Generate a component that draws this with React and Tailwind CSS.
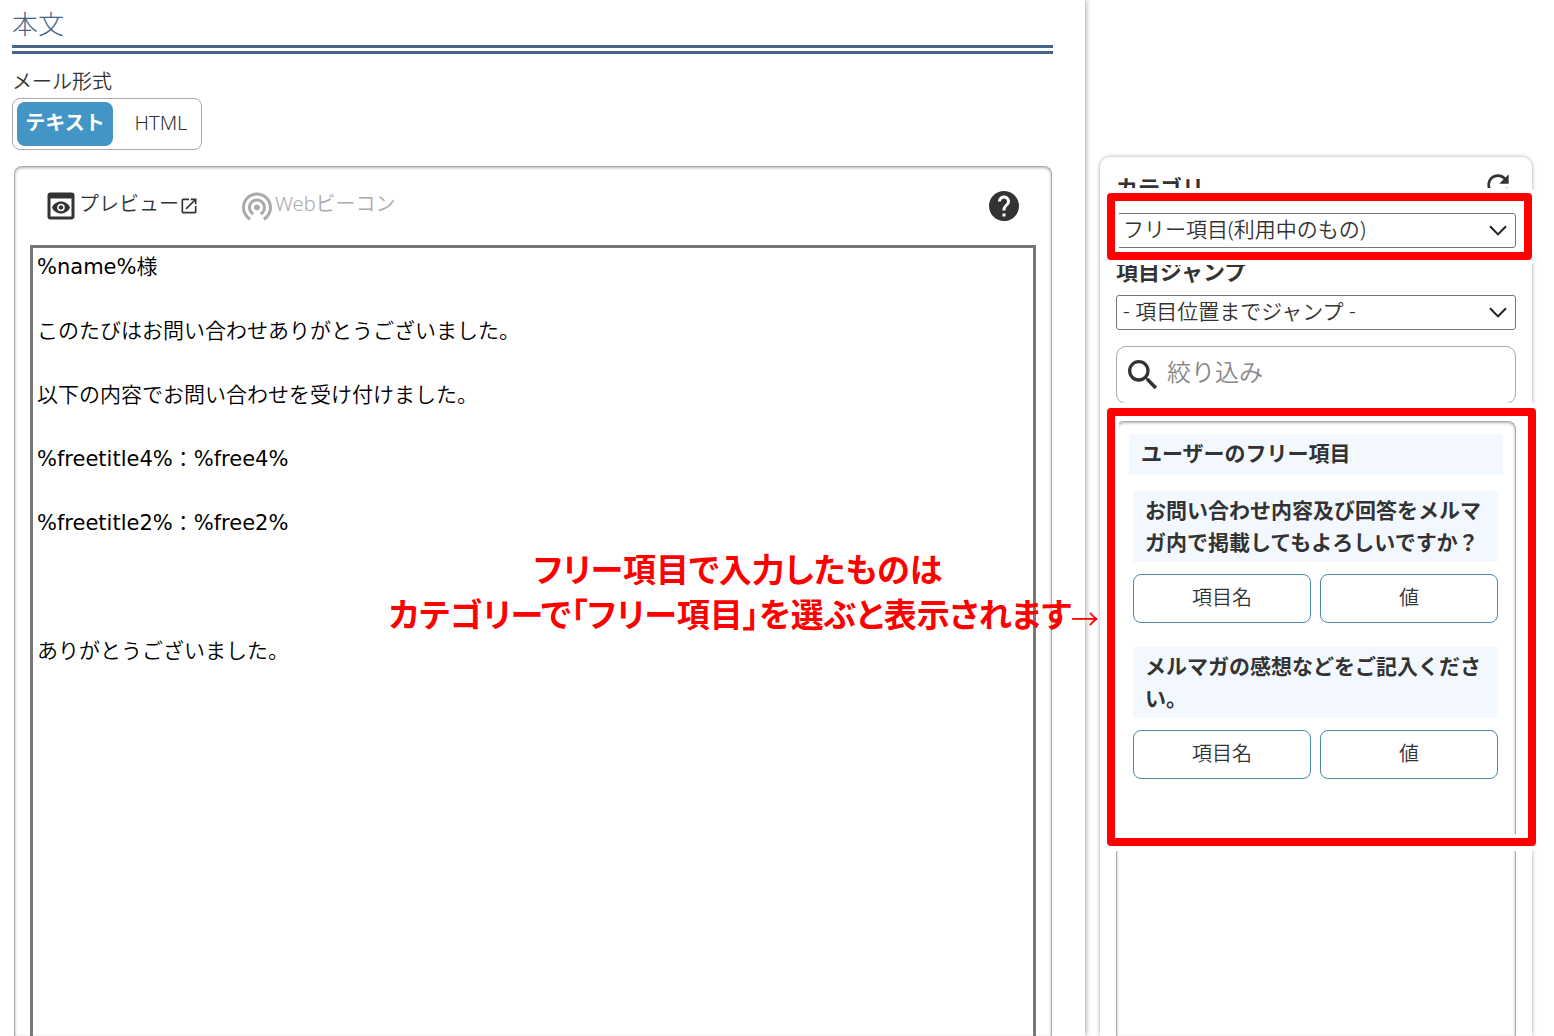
import { useState } from "react";
import {
  MdHelp,
  MdOpenInNew,
  MdPreview,
  MdRefresh,
  MdSearch,
  MdWifiTethering,
} from "react-icons/md";

const MAIL_BODY = `%name%様

このたびはお問い合わせありがとうございました。

以下の内容でお問い合わせを受け付けました。

%freetitle4%：%free4%

%freetitle2%：%free2%



ありがとうございました。
`;

const freeItems = [
  { id: 4, title: "お問い合わせ内容及び回答をメルマガ内で掲載してもよろしいですか？" },
  { id: 2, title: "メルマガの感想などをご記入ください。" },
];

function SelectBox({ id, options }) {
  return (
    <div className="relative">
      <select
        id={id}
        className="block w-full h-[35px] appearance-none rounded-[3px] border border-[#767676] bg-white pl-1.5 pr-10 pb-1 text-[21px] leading-7 text-[#333] font-[350]"
      >
        {options.map((o) => (
          <option key={o}>{o}</option>
        ))}
      </select>
      <svg
        viewBox="0 0 18 11"
        className="pointer-events-none absolute right-[9px] top-3 w-[18px] h-[11px]"
        fill="none"
        stroke="#222"
        strokeWidth="2"
      >
        <path d="M1 1.2 L9 9.4 L17 1.2" />
      </svg>
    </div>
  );
}

function InsertButton({ children }) {
  return (
    <button
      type="button"
      className="h-[49px] flex-1 rounded-lg border border-[#4b8ba8] bg-white pb-0.5 text-xl font-[350] text-[#333]"
    >
      {children}
    </button>
  );
}

function FreeItem({ title }) {
  return (
    <div className="ml-1 mr-[5px]">
      <p className="bg-[#f3f8fe] px-3 pt-[3px] pb-1 text-[21px] leading-8 font-bold">{title}</p>
      <div className="mt-3 flex gap-[9px]">
        <InsertButton>項目名</InsertButton>
        <InsertButton>値</InsertButton>
      </div>
    </div>
  );
}

// red marker frame with a white edge on both sides
function Marker({ className }) {
  return (
    <div
      className={`pointer-events-none absolute z-10 rounded-[4px] border-8 border-[#ff0000] shadow-[0_0_0_5px_#fff,inset_0_0_0_4px_#fff] ${className}`}
    />
  );
}

export default function App() {
  const [format, setFormat] = useState("text");
  const [body, setBody] = useState(MAIL_BODY);

  const tab = (active) =>
    active
      ? "rounded-lg bg-[#4395c6] font-bold text-white"
      : "rounded-lg font-[350] text-[#333]";

  return (
    <div className="relative flex min-h-screen overflow-hidden bg-white text-[#333] font-['Noto_Sans','Noto_Sans_CJK_JP',sans-serif]">
      <main className="relative flex flex-1 flex-col pl-3 pr-8 shadow-[1px_0_5px_rgba(0,0,0,0.35)]">
        <h1 className="h-[54px] border-b-9 border-double border-[#466489] pt-1 text-[26px] leading-10 font-light text-[#466489]">
          本文
        </h1>

        <p className="mt-3 text-xl leading-8 font-[350]">メール形式</p>
        <div className="flex h-[52px] w-[190px] items-center rounded-lg border border-[#aaa] pl-1">
          <button
            type="button"
            className={`h-11 w-24 shrink-0 pb-0.5 text-xl ${tab(format === "text")}`}
            onClick={() => setFormat("text")}
          >
            テキスト
          </button>
          <button
            type="button"
            className={`h-11 flex-1 pl-2 pb-0.5 text-xl ${tab(format === "html")}`}
            onClick={() => setFormat("html")}
          >
            HTML
          </button>
        </div>

        <section className="mt-4 ml-0.5 mr-px flex flex-1 flex-col rounded-t-lg border border-b-0 border-[#aaa] px-[15px] shadow-[inset_0_1px_3px_rgba(0,0,0,0.3)]">
          <div className="flex h-[78px] items-center pl-[13px] pr-3.5">
            <button type="button" className="flex items-center text-xl font-[350]">
              <MdPreview className="h-9 w-9 shrink-0" />
              <span className="pb-1">プレビュー</span>
              <MdOpenInNew className="h-5 w-5 shrink-0" />
            </button>
            <button type="button" className="ml-10 flex items-center text-xl font-[350] text-[#aaa]">
              <MdWifiTethering className="h-9 w-9 shrink-0" />
              <span className="pb-1">Webビーコン</span>
            </button>
            <button type="button" aria-label="ヘルプ" className="ml-auto">
              <MdHelp className="h-9 w-9" />
            </button>
          </div>
          <textarea
            aria-label="本文"
            value={body}
            onChange={(e) => setBody(e.target.value)}
            className="w-full flex-1 resize-none border-3 border-b-0 border-[#777] px-1 pt-[3px] text-[21px] leading-8 text-black outline-none font-['DejaVu_Sans','Noto_Sans_CJK_JP_DemiLight','Noto_Sans_CJK_JP_Light','Noto_Sans_CJK_JP',sans-serif]"
          />
        </section>
      </main>

      <aside className="flex w-[469px] shrink-0 flex-col pl-[15px] pr-[22px] pt-[157px]">
        <div className="flex flex-1 flex-col rounded-t-[10px] px-4 pt-3 shadow-[0_0_4px_rgba(0,0,0,0.35)]">
          <div className="flex h-11 items-start justify-between">
            <label htmlFor="category" className="text-[22px] leading-9 font-bold">
              カテゴリ
            </label>
            <button type="button" aria-label="更新" className="mr-0.5">
              <MdRefresh className="h-8 w-8" />
            </button>
          </div>
          <div className="relative">
            <SelectBox id="category" options={["フリー項目(利用中のもの)"]} />
            <Marker className="-left-[9px] -right-4 -top-5 -bottom-3" />
          </div>

          <label htmlFor="jump" className="mt-[7px] h-10 text-[22px] leading-8 font-bold">
            項目ジャンプ
          </label>
          <SelectBox id="jump" options={["- 項目位置までジャンプ -"]} />

          <div className="mt-4 flex h-[58px] items-center rounded-[10px] border border-[#aaa] pl-1.5">
            <MdSearch className="h-10 w-10 shrink-0" />
            <input
              type="text"
              aria-label="絞り込み"
              placeholder="絞り込み"
              className="w-full min-w-0 pb-1.5 pl-1 text-2xl font-[350] outline-none placeholder:text-[#888]"
            />
          </div>

          <div className="relative mt-[17px] flex-1 rounded-t-lg border border-b-0 border-[#aaa] p-3 shadow-[inset_0_1px_3px_rgba(0,0,0,0.3)]">
            <h2 className="h-[41px] bg-[#f3f8fe] pl-3 text-[21px] leading-[38px] font-bold">
              ユーザーのフリー項目
            </h2>
            <div className="mt-4 flex flex-col gap-6">
              {freeItems.map((item) => (
                <FreeItem key={item.id} title={item.title} />
              ))}
            </div>
            <Marker className="-left-2.5 -right-[21px] -top-3.5 h-[438px]" />
          </div>
        </div>
      </aside>

      {/* callout written over the editor */}
      <div className="pointer-events-none absolute right-[455px] top-[547px] z-20 flex items-end text-[#ff0000]">
        <p className="text-center text-[33px] leading-[45px] font-bold whitespace-nowrap [font-feature-settings:'palt']">
          <span className="block pl-4">フリー項目で入力したものは</span>
          カテゴリーで「フリー項目」を選ぶと表示されます
        </p>
        <span className="text-[28px] leading-9 font-[350]">→</span>
      </div>
    </div>
  );
}
